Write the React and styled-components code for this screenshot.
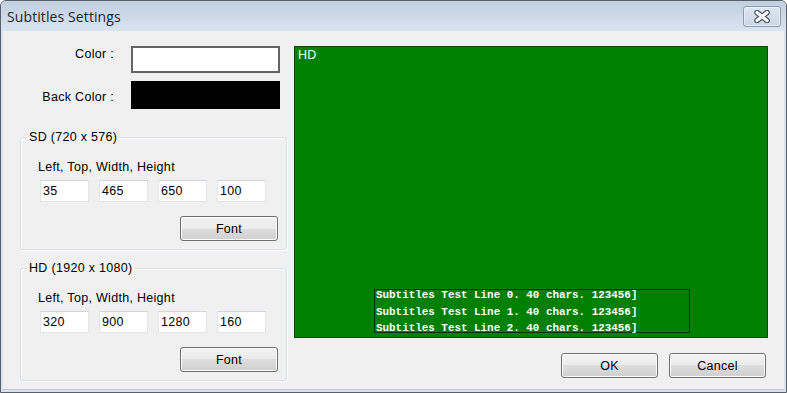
import React from "react";
import styled, { createGlobalStyle } from "styled-components";

const GlobalStyle = createGlobalStyle`
  * {
    box-sizing: border-box;
  }
  html, body {
    margin: 0;
    padding: 0;
    width: 100%;
    height: 100%;
    overflow: hidden;
    background: #ffffff;
  }
`;

const Window = styled.div`
  width: 787px;
  height: 393px;
  display: flex;
  flex-direction: column;
  border: 1px solid #5a6069;
  border-radius: 6px 6px 0 0;
  background: #d7e2ee;
  overflow: hidden;
  font-family: "Liberation Sans", Arial, sans-serif;
  letter-spacing: 0.3px;
`;

const TitleBar = styled.div`
  height: 30px;
  flex-shrink: 0;
  display: flex;
  justify-content: space-between;
  align-items: flex-start;
  padding: 0 5px 0 6px;
  background: linear-gradient(#c0cfdf, #d9e4f1);
`;

const Title = styled.div`
  margin-top: 6px;
  font-family: "Open Sans", "Noto Sans", sans-serif;
  font-size: 14px;
  line-height: 20px;
  letter-spacing: 0.1px;
  color: #1b2530;
`;

const CloseButton = styled.div`
  width: 38px;
  height: 21px;
  margin-top: 5px;
  display: flex;
  align-items: center;
  justify-content: center;
  border: 1px solid #8f9cad;
  border-radius: 3px;
  background: linear-gradient(#dde6f0, #c9d6e4);
  box-shadow: inset 0 0 0 1px rgba(255, 255, 255, 0.45);
`;

const Client = styled.div`
  flex: 1;
  display: flex;
  gap: 7px;
  margin: 0 2px 2px;
  padding: 15px 16px 0 17px;
  background: #f0f0f0;
  border-bottom: 1px solid #b9c6d5;
`;

const LeftColumn = styled.div`
  width: 267px;
  display: flex;
  flex-direction: column;
`;

const ColorRow = styled.div`
  display: flex;
  align-items: flex-start;
  gap: 17px;
  margin-bottom: ${({ $gap }) => $gap}px;
`;

const ColorLabel = styled.div`
  width: 94px;
  padding-top: ${({ $offset }) => $offset}px;
  text-align: right;
  font-size: 12.5px;
  line-height: 14px;
  color: #000;
`;

const Swatch = styled.div`
  width: 149px;
  height: ${({ $h }) => $h}px;
  background: ${({ $color }) => $color};
  border: ${({ $framed }) => ($framed ? "2px solid #646464" : "none")};
`;

const Group = styled.fieldset`
  margin: ${({ $top }) => $top}px 0 0;
  padding: 0 8px 7px 0;
  min-width: 0;
  height: 120px;
  border: 1px solid #d5dfe5;
  border-radius: 3px;
  box-shadow: inset 1px 1px 0 #ffffff, 1px 1px 0 #ffffff;
`;

const Legend = styled.legend`
  margin-left: 6px;
  padding: 0 2px;
  font-size: 12.5px;
  line-height: 14px;
  color: #000;
`;

const GroupBody = styled.div`
  display: flex;
  flex-direction: column;
  padding: 16px 0 0 17px;
`;

const FieldLabel = styled.div`
  font-size: 12.5px;
  line-height: 14px;
  color: #000;
`;

const Inputs = styled.div`
  display: flex;
  gap: 10px;
  margin: 6px 0 0 2px;
`;

const NumberBox = styled.div`
  width: 49px;
  height: 22px;
  padding: 0 2px;
  display: flex;
  align-items: center;
  background: #ffffff;
  border: 1px solid #e2e5e8;
  border-top-color: #d2d6da;
  font-size: 12.5px;
  color: #000;
`;

const Button = styled.div`
  width: 98px;
  height: 25px;
  display: flex;
  align-items: center;
  justify-content: center;
  border: 1px solid #707070;
  border-radius: 3px;
  background: linear-gradient(#f2f2f2 0%, #ebebeb 50%, #dddddd 50%, #cfcfcf 100%);
  box-shadow: inset 0 0 0 1px #fbfbfb;
  font-size: 12.5px;
  color: #000;
`;

const FontButton = styled(Button)`
  align-self: flex-end;
  margin-top: 14px;
`;

const RightColumn = styled.div`
  width: 474px;
  display: flex;
  flex-direction: column;
`;

const Preview = styled.div`
  position: relative;
  height: 292px;
  padding: 1px 3px;
  background: #008000;
  border: 1px solid #004b00;
  color: #ffffff;
  font-size: 12.5px;
  line-height: 14px;
`;

const SubtitleBox = styled.div`
  position: absolute;
  border: 1px solid #003300;
  overflow: visible;
`;

const SubtitleLines = styled.div`
  margin-top: -3px;
  padding-left: 1px;
  font-family: "Liberation Mono", "Courier New", monospace;
  font-weight: bold;
  font-size: 10.9px;
  line-height: 16.5px;
  letter-spacing: 0;
  white-space: pre;
  color: #ffffff;
`;

const Actions = styled.div`
  display: flex;
  justify-content: flex-end;
  gap: 11px;
  margin-top: 15px;
  padding-right: 2px;
`;

const DialogButton = styled(Button)`
  width: 97px;
`;

const CloseIcon = () => (
  <svg width="16" height="13" viewBox="0 0 16 13">
    <g strokeLinecap="round">
      <path d="M3 2.5 L13 10.5 M13 2.5 L3 10.5" stroke="#46515f" strokeWidth="5.5" />
      <path d="M3 2.5 L13 10.5 M13 2.5 L3 10.5" stroke="#ffffff" strokeWidth="3.2" />
    </g>
  </svg>
);

const groups = [
  { title: "SD (720 x 576)", values: [35, 465, 650, 100], top: 21 },
  { title: "HD (1920 x 1080)", values: [320, 900, 1280, 160], top: 11 },
];

const hd = { left: 320, top: 900, width: 1280, height: 160 };
const innerW = 472;
const innerH = 290;

const lines = [0, 1, 2].map(
  (n) => `Subtitles Test Line ${n}. 40 chars. 123456]`
);

const App = () => {
  const box = {
    left: Math.round((hd.left / 1920) * innerW),
    top: Math.round((hd.top / 1080) * innerH),
    width: Math.round((hd.width / 1920) * innerW) + 1,
    height: Math.round((hd.height / 1080) * innerH) + 1,
  };

  return (
    <>
      <GlobalStyle />
      <Window>
        <TitleBar>
          <Title>Subtitles Settings</Title>
          <CloseButton>
            <CloseIcon />
          </CloseButton>
        </TitleBar>
        <Client>
          <LeftColumn>
            <ColorRow $gap={8}>
              <ColorLabel $offset={1}>Color :</ColorLabel>
              <Swatch $h={27} $color="#ffffff" $framed />
            </ColorRow>
            <ColorRow $gap={0}>
              <ColorLabel $offset={9}>Back Color :</ColorLabel>
              <Swatch $h={28} $color="#000000" />
            </ColorRow>
            {groups.map((g) => (
              <Group key={g.title} $top={g.top}>
                <Legend>{g.title}</Legend>
                <GroupBody>
                  <FieldLabel>Left, Top, Width, Height</FieldLabel>
                  <Inputs>
                    {g.values.map((v, i) => (
                      <NumberBox key={i}>{v}</NumberBox>
                    ))}
                  </Inputs>
                  <FontButton>Font</FontButton>
                </GroupBody>
              </Group>
            ))}
          </LeftColumn>
          <RightColumn>
            <Preview>
              HD
              <SubtitleBox style={box}>
                <SubtitleLines>{lines.join("\n")}</SubtitleLines>
              </SubtitleBox>
            </Preview>
            <Actions>
              <DialogButton>OK</DialogButton>
              <DialogButton>Cancel</DialogButton>
            </Actions>
          </RightColumn>
        </Client>
      </Window>
    </>
  );
};

export default App;
